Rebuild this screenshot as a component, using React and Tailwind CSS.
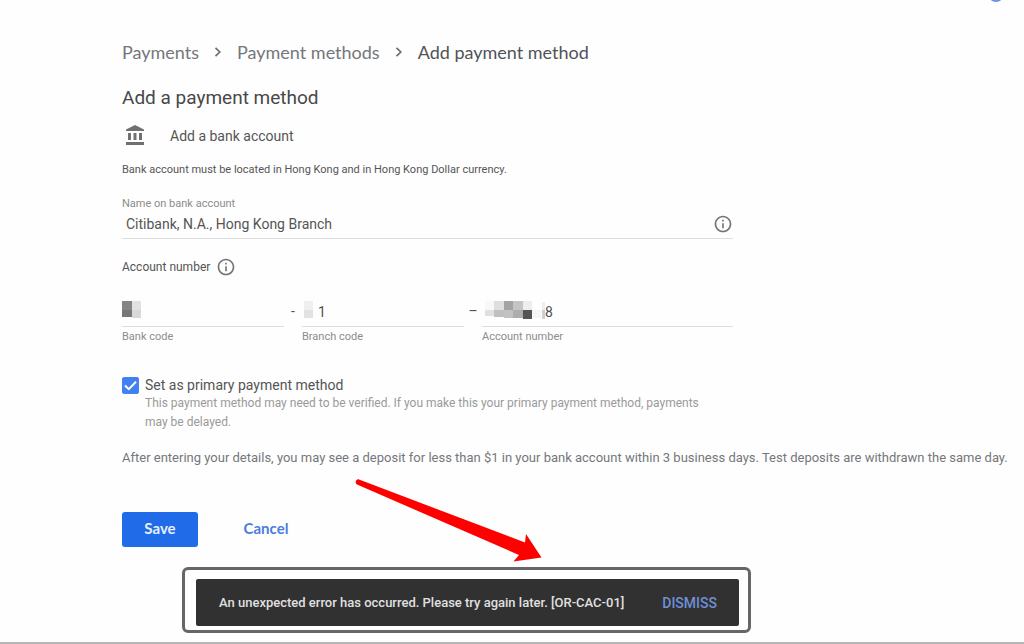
import { useState } from 'react';

const BANK_CODE_BLOCKS = [
  { x: 0, y: 0, w: 10, h: 9, fill: '#858585' },
  { x: 10, y: 0, w: 9, h: 9, fill: '#e2e2e2' },
  { x: 0, y: 9, w: 10, h: 7, fill: '#777777' },
  { x: 10, y: 9, w: 9, h: 8, fill: '#d8d8d8' }
];

const BRANCH_CODE_BLOCKS = [
  { x: 2, y: 0, w: 9, h: 9, fill: '#efefef' },
  { x: 2, y: 9, w: 9, h: 8, fill: '#e2e2e2' }
];

const ACCOUNT_BLOCKS = [
  { x: 3, y: 0, w: 9, h: 9, fill: '#f8f8f8' },
  { x: 12, y: 0, w: 10, h: 9, fill: '#dedede' },
  { x: 22, y: 0, w: 9, h: 9, fill: '#a3a3a3' },
  { x: 31, y: 0, w: 10, h: 9, fill: '#c4c4c4' },
  { x: 41, y: 0, w: 9, h: 9, fill: '#ededed' },
  { x: 3, y: 9, w: 9, h: 6, fill: '#e0e0e0' },
  { x: 12, y: 9, w: 10, h: 7, fill: '#c0c0c0' },
  { x: 22, y: 9, w: 9, h: 8, fill: '#c2c2c2' },
  { x: 31, y: 9, w: 10, h: 8, fill: '#adadad' },
  { x: 41, y: 9, w: 9, h: 9, fill: '#545454' },
  { x: 50, y: 9, w: 9, h: 8, fill: '#f5f5f5' },
  { x: 60, y: 1, w: 3, h: 8, fill: '#eeeeee' },
  { x: 60, y: 9, w: 3, h: 9, fill: '#cfcfcf' }
];

const Mosaic = ({ blocks, width }) => (
  <svg width={width} height="18" className="mt-[2px] shrink-0" shapeRendering="crispEdges" aria-hidden="true">
    {blocks.map((b) => (
      <rect key={`${b.x}-${b.y}`} x={b.x} y={b.y} width={b.w} height={b.h} fill={b.fill} />
    ))}
  </svg>
);

const InfoIcon = () => (
  <svg width="20" height="20" viewBox="0 0 24 24" fill="#757575" className="shrink-0" aria-hidden="true">
    <path d="M11 17h2v-6h-2v6zm1-15C6.48 2 2 6.48 2 12s4.48 10 10 10 10-4.48 10-10S17.52 2 12 2zm0 18c-4.41 0-8-3.59-8-8s3.59-8 8-8 8 3.59 8 8-3.59 8-8 8zM11 9h2V7h-2v2z" />
  </svg>
);

const BankIcon = () => (
  <svg width="26" height="24" viewBox="0 0 26 24" fill="#707070" aria-hidden="true">
    <path d="M13 1 22 5.500V7H4V5.500zM6 9h3v7H6zM11.500 9h3v7h-3zM17 9h3v7h-3zM4 18h18v3H4z" />
  </svg>
);

const Chevron = () => (
  <svg width="8" height="12" viewBox="0 0 8 12" fill="none" stroke="#6b6e72" strokeWidth="1.7" aria-hidden="true">
    <path d="M1.500 1.800 5.800 6 1.500 10.200" />
  </svg>
);

const CodeField = ({ id, label, value, onChange, blocks, maskWidth, className }) => (
  <div className={className}>
    <div className="flex h-7 items-start border-b border-[#dedede]">
      <Mosaic blocks={blocks} width={maskWidth} />
      <input
        id={id}
        type="text"
        value={value}
        onChange={onChange}
        className="h-[26px] w-full min-w-0 bg-transparent text-sm text-[#505050] outline-none"
      />
    </div>
    <label htmlFor={id} className="block text-[11px] leading-5 text-[#8c8c8c]">
      {label}
    </label>
  </div>
);

const Toast = ({ onDismiss }) => (
  <div className="relative ml-[60px] mt-5 w-[569px] rounded-md border-3 border-[#666666] pb-1 pl-[11px] pr-[9px] pt-[9px]">
    <div role="alert" className="flex h-[47px] items-center justify-between rounded-xs bg-[#313131] pl-[23px] pr-[22px]">
      <span className="text-[13px] font-medium text-[#e0e0e0]">
        An unexpected error has occurred. Please try again later. [OR-CAC-01]
      </span>
      <button type="button" onClick={onDismiss} className="text-sm font-medium text-[#6f8fd8]">
        DISMISS
      </button>
    </div>
    <svg
      width="190"
      height="86"
      viewBox="0 0 190 86"
      className="pointer-events-none absolute -top-[92px] left-[169px]"
      aria-hidden="true"
    >
      <path d="M5 1.500 171 64.500 172 56 187.500 79.500 159.500 83.500 165 77 3 6.500C0.500 5 2 0.500 5 1.500z" fill="#ff0000" />
    </svg>
  </div>
);

const App = () => {
  const [form, setForm] = useState({
    name: 'Citibank, N.A., Hong Kong Branch',
    bankCode: '',
    branchCode: '1',
    account: '8'
  });
  const [primary, setPrimary] = useState(true);
  const [showToast, setShowToast] = useState(true);

  const handleChange = (field) => (event) => {
    const { value } = event.target;
    setForm((prev) => ({ ...prev, [field]: value }));
  };

  return (
    <div className="relative min-h-screen overflow-hidden border-b-2 border-[#b5b5b5] bg-[#fefefe] pl-[122px] font-[Roboto,sans-serif] text-[#555555]">
      <span className="absolute -top-[14px] right-5 size-4 rounded-full bg-[#6f8ff0]" />

      <nav className="flex items-center pt-10 font-[Lato,sans-serif] text-lg leading-6 text-[#74777b]">
        <a href="#payments">Payments</a>
        <span className="flex w-[38px] justify-center">
          <Chevron />
        </span>
        <a href="#methods">Payment methods</a>
        <span className="flex w-[38px] justify-center">
          <Chevron />
        </span>
        <span className="text-[#505357]">Add payment method</span>
      </nav>

      <form onSubmit={(event) => event.preventDefault()}>
        <div className="max-w-[611px]">
          <h1 className="mt-5 text-[19px] leading-7 text-[#484848]">Add a payment method</h1>

          <div className="mt-3 flex items-center gap-[22px]">
            <BankIcon />
            <h2 className="text-sm leading-6">Add a bank account</h2>
          </div>
          <p className="mt-3 text-[11px] leading-5">
            Bank account must be located in Hong Kong and in Hong Kong Dollar currency.
          </p>

          <label htmlFor="holder" className="mt-[14px] block text-[11px] leading-5 text-[#8c8c8c]">
            Name on bank account
          </label>
          <div className="flex h-[25px] items-start border-b border-[#dedede]">
            <input
              id="holder"
              type="text"
              value={form.name}
              onChange={handleChange('name')}
              className="h-5 w-full bg-transparent px-1 text-sm outline-none"
            />
            <InfoIcon />
          </div>

          <div className="mt-4 flex items-center gap-1.5 text-xs leading-6">
            <span>Account number</span>
            <InfoIcon />
          </div>

          <div className="mt-5 flex">
            <CodeField
              id="bank-code"
              label="Bank code"
              value={form.bankCode}
              onChange={handleChange('bankCode')}
              blocks={BANK_CODE_BLOCKS}
              maskWidth={20}
              className="w-[162px]"
            />
            <span className="w-[18px] text-center text-sm leading-6">-</span>
            <CodeField
              id="branch-code"
              label="Branch code"
              value={form.branchCode}
              onChange={handleChange('branchCode')}
              blocks={BRANCH_CODE_BLOCKS}
              maskWidth={16}
              className="w-[162px]"
            />
            <span className="w-[18px] text-center text-sm leading-6">–</span>
            <CodeField
              id="account"
              label="Account number"
              value={form.account}
              onChange={handleChange('account')}
              blocks={ACCOUNT_BLOCKS}
              maskWidth={63}
              className="flex-1"
            />
          </div>

          <div className="mt-[26px] flex gap-[6px]">
            <span className="relative mt-1 size-[17px] shrink-0">
              <input
                id="primary"
                type="checkbox"
                checked={primary}
                onChange={(event) => setPrimary(event.target.checked)}
                className="peer block size-[17px] appearance-none rounded-xs border border-[#4285f4] checked:bg-[#4280ef]"
              />
              <svg
                width="17"
                height="17"
                viewBox="0 0 17 17"
                fill="none"
                stroke="#ffffff"
                strokeWidth="2"
                className="pointer-events-none absolute inset-0 hidden peer-checked:block"
                aria-hidden="true"
              >
                <path d="M3 8.500 6.800 12.200 14 4.800" />
              </svg>
            </span>
            <div className="pr-3">
              <label htmlFor="primary" className="block text-sm leading-6">
                Set as primary payment method
              </label>
              <p className="-mt-[3px] text-xs leading-[19px] text-[#9a9a9a]">
                This payment method may need to be verified. If you make this your primary payment method, payments
                may be delayed.
              </p>
            </div>
          </div>
        </div>

        <p className="mt-4 text-[13px] leading-5 text-[#74777c]">
          After entering your details, you may see a deposit for less than $1 in your bank account within 3 business
          days. Test deposits are withdrawn the same day.
        </p>

        <div className="mt-11 flex gap-[30px] font-[Lato,sans-serif] text-[15px] font-bold">
          <button type="submit" className="h-[35px] w-[76px] rounded-[3px] bg-[#1f6be8] pb-[2px] text-[#e8f0fe]">
            Save
          </button>
          <button type="button" className="h-[35px] w-[76px] pb-[2px] text-[#4a7de0]">
            Cancel
          </button>
        </div>
      </form>

      {showToast && <Toast onDismiss={() => setShowToast(false)} />}
    </div>
  );
};

export default App;
